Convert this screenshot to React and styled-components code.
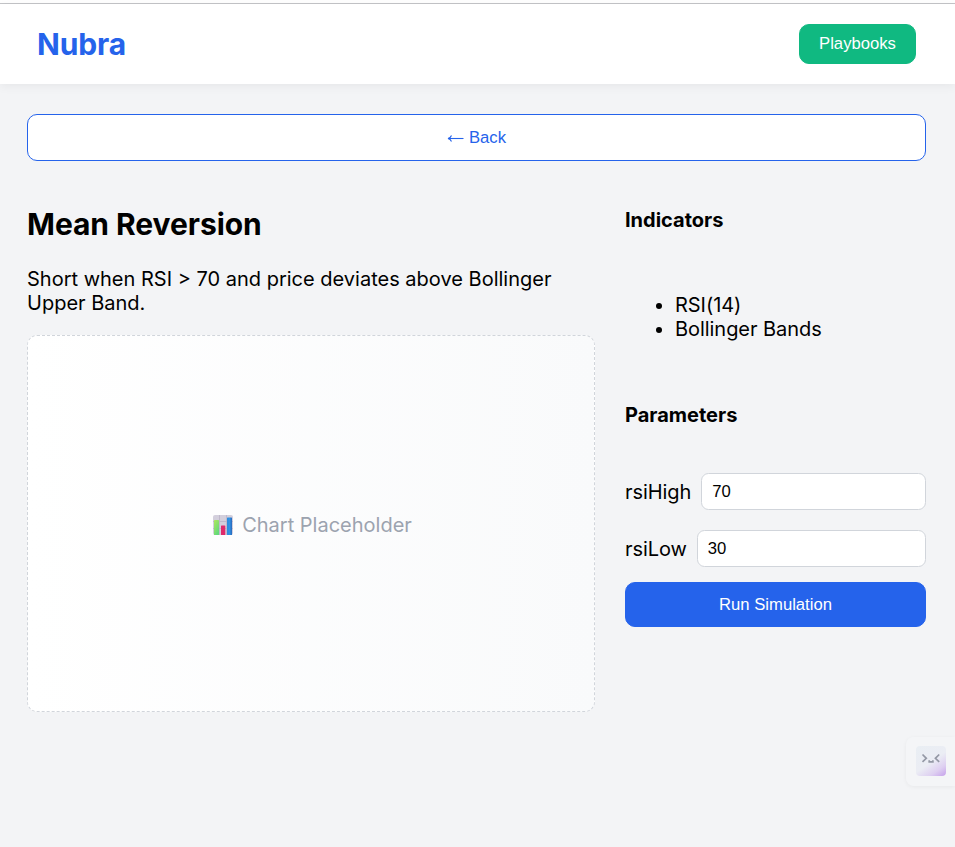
import React from "react";
import styled, { createGlobalStyle } from "styled-components";

const GlobalStyle = createGlobalStyle`
  * { box-sizing: border-box; }
  body {
    margin: 0;
    background: #f3f4f6;
    color: #000;
    font-family: Inter, sans-serif;
    font-size: 20px;
    line-height: 24px;
  }
`;

const Page = styled.div`
  min-height: 847px;
  overflow: hidden;
`;

const TopEdge = styled.div`
  height: 4px;
  background: #fff;
  border-bottom: 1px solid #c4c5c8;
`;

const Header = styled.header`
  height: 80px;
  padding: 0 39px 0 37px;
  display: flex;
  align-items: center;
  justify-content: space-between;
  background: #fff;
  box-shadow: 0 2px 10px rgba(0, 0, 0, 0.06);
`;

const Logo = styled.div`
  font-size: 30px;
  line-height: 36px;
  font-weight: 700;
  letter-spacing: -0.15px;
  color: #2563eb;
`;

const Button = styled.button`
  height: ${(p) => p.$height || 45}px;
  width: ${(p) => p.$width || "100%"};
  padding: 0 0 1px;
  display: flex;
  align-items: center;
  justify-content: center;
  gap: 5px;
  border: 1px solid ${(p) => p.$border || p.$bg};
  border-radius: 10px;
  background: ${(p) => p.$bg};
  color: ${(p) => p.$color || "#fff"};
  font-family: "Liberation Sans", Arial, sans-serif;
  font-size: 16.667px;
  line-height: 19px;
`;

const Main = styled.main`
  padding: 30px 29px 0 27px;
`;

const Columns = styled.div`
  margin-top: 45px;
  display: grid;
  grid-template-columns: 568px 301px;
  gap: 30px;
`;

const Title = styled.h2`
  margin: 0 0 25px;
  font-size: 30px;
  line-height: 36px;
  font-weight: 700;
  letter-spacing: -0.06px;
`;

const Description = styled.p`
  margin: 0 0 20px;
`;

const Chart = styled.div`
  height: 377px;
  padding: 2px 0 0 3px;
  display: flex;
  align-items: center;
  justify-content: center;
  gap: 9px;
  border: 1px dashed #d1d5db;
  border-radius: 10px;
  background: linear-gradient(to right, #fff, #f9fafb);
  color: #9ca3af;
`;

const Side = styled.aside`
  padding-top: 2px;
`;

const SideTitle = styled.h4`
  margin: 0;
  font-size: 20px;
  line-height: 24px;
  font-weight: 700;
`;

const IndicatorList = styled.ul`
  margin: 61px 0 62px;
  padding-left: 50px;
  letter-spacing: -0.05px;
`;

const Fields = styled.div`
  margin: 46px 0 15px;
  display: flex;
  flex-direction: column;
  gap: 20px;
`;

const Field = styled.label`
  display: flex;
  align-items: center;
  gap: 10px;
  letter-spacing: -0.08px;
`;

const Input = styled.input`
  flex: 1;
  min-width: 0;
  height: 37px;
  padding: 1px 10px 0;
  border: 1px solid #d1d5db;
  border-radius: 7.5px;
  background: #fff;
  color: #000;
  font-family: "Liberation Sans", Arial, sans-serif;
  font-size: 16.667px;
`;

const AssistantTab = styled.div`
  position: fixed;
  top: 737px;
  right: 0;
  width: 49px;
  height: 49px;
  padding: 9px 0 0 10px;
  border-radius: 8px 0 0 8px;
  background: #f4f5f7;
  box-shadow: 0 1px 4px rgba(0, 0, 0, 0.05);
`;

const Face = styled.div`
  width: 30px;
  height: 30px;
  border-radius: 4px;
  background: linear-gradient(145deg, #e9eef3 0%, #ebedf4 52%, #decff1 78%, #c5a0eb 100%);
  svg { display: block; }
`;

const BackArrow = () => (
  <svg width="17" height="9" viewBox="0 0 17 9" fill="none" stroke="currentColor">
    <path d="M1 5.5h15.5" strokeWidth="1.1" />
    <path d="M4.5 2.5Q3.5 5 1 5.5Q3.5 6 4.5 8.5" strokeWidth="1.1" />
  </svg>
);

const ChartIcon = () => (
  <svg width="20" height="20" viewBox="0 0 20 20">
    <defs>
      <linearGradient id="green" x2=".6" y2="1">
        <stop stopColor="#b0e75b" />
        <stop offset="1" stopColor="#62d97a" />
      </linearGradient>
      <linearGradient id="blue" x2="1">
        <stop stopColor="#278be0" />
        <stop offset=".5" stopColor="#3293e4" />
        <stop offset="1" stopColor="#2868bc" />
      </linearGradient>
    </defs>
    <rect width="20" height="20" rx="2" fill="#d3cfdc" />
    <path d="M6.5 0v20M13.5 0v20M0 6.5h20M0 13.5h20" stroke="#bbb4c7" strokeWidth=".8" />
    <rect x="1" y="5" width="5" height="15" rx=".6" fill="url(#green)" />
    <rect x="8" y="10.5" width="4.3" height="9.5" rx=".6" fill="#df2a6b" />
    <rect x="14" y="2.5" width="5" height="17.5" rx=".6" fill="url(#blue)" />
  </svg>
);

const FaceIcon = () => (
  <svg width="30" height="30" viewBox="0 0 30 30" fill="none" stroke="#9498a5" strokeWidth="1.7">
    <path d="m6.5 8.5 3.8 3.8-3.8 3.5M23.2 8.5l-3.8 3.8 3.8 3.5M13.2 14.2v1.6h3.7v-1.6" />
  </svg>
);

const parameters = [
  { name: "rsiHigh", value: "70" },
  { name: "rsiLow", value: "30" },
];

export default function App() {
  return (
    <Page>
      <GlobalStyle />
      <TopEdge />
      <Header>
        <Logo>Nubra</Logo>
        <Button $width="117px" $height={40} $bg="#10b981">Playbooks</Button>
      </Header>
      <Main>
        <Button $height={47} $bg="#fff" $border="#2563eb" $color="#2563eb"><BackArrow />Back</Button>
        <Columns>
          <section>
            <Title>Mean Reversion</Title>
            <Description>
              Short when RSI &gt; 70 and price deviates above Bollinger Upper Band.
            </Description>
            <Chart><ChartIcon /><span>Chart Placeholder</span></Chart>
          </section>
          <Side>
            <SideTitle>Indicators</SideTitle>
            <IndicatorList>
              <li>RSI(14)</li>
              <li>Bollinger Bands</li>
            </IndicatorList>
            <SideTitle>Parameters</SideTitle>
            <Fields>
              {parameters.map(({ name, value }) => (
                <Field key={name}>{name}<Input defaultValue={value} /></Field>
              ))}
            </Fields>
            <Button $bg="#2563eb">Run Simulation</Button>
          </Side>
        </Columns>
      </Main>
      <AssistantTab><Face><FaceIcon /></Face></AssistantTab>
    </Page>
  );
}
